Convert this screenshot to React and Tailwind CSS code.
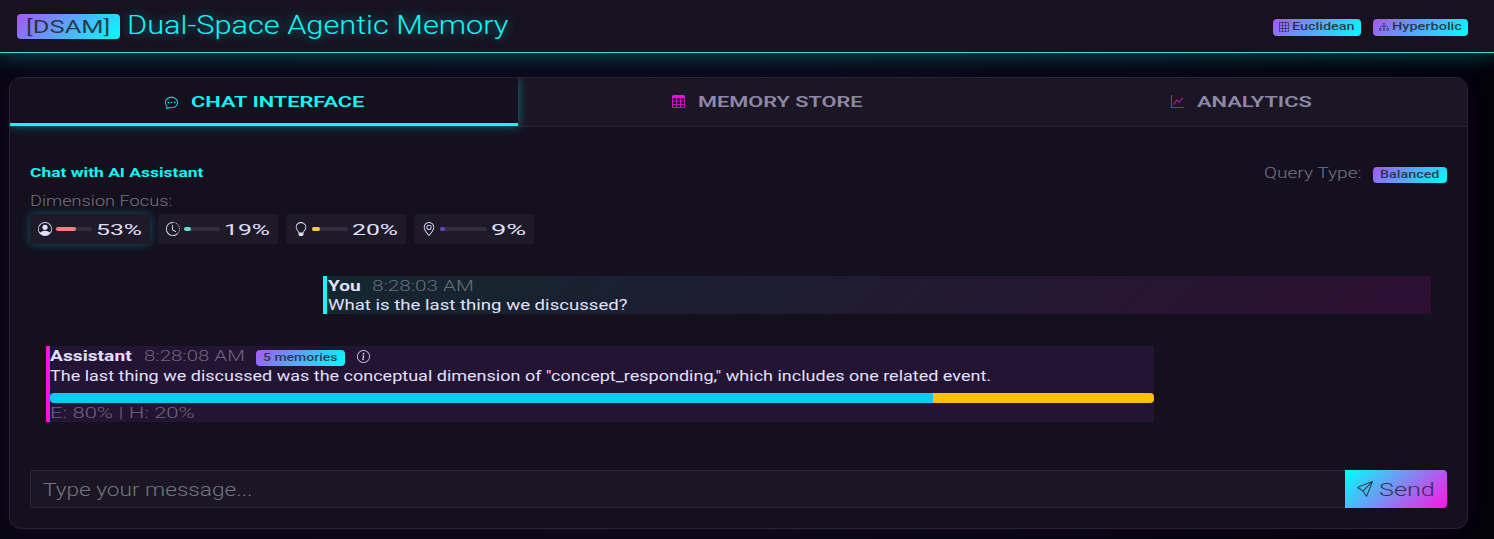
import { useLayoutEffect, useRef } from "react";
import {
  BsChatDots, BsTable, BsGraphUp, BsGrid3X3, BsDiagram3, BsPersonCircle,
  BsClockHistory, BsLightbulb, BsGeoAlt, BsInfoCircle, BsSend,
} from "react-icons/bs";

// Stretches its text horizontally so that it fills the width given in className.
function Wide({ className = "", children }) {
  const outer = useRef(null);
  const inner = useRef(null);
  useLayoutEffect(() => {
    const ratio = outer.current.clientWidth / inner.current.offsetWidth;
    inner.current.style.transform = `scaleX(${ratio})`;
  }, [children]);
  return (
    <span ref={outer} className={`block shrink-0 whitespace-nowrap ${className}`}>
      <span ref={inner} className="inline-block origin-left align-top">{children}</span>
    </span>
  );
}

const badge = "flex items-center rounded bg-linear-135/srgb from-[#a855f7] to-[#00ffff] text-[#212529]/85";

function Tab({ icon: Icon, label, className, active }) {
  return (
    <div
      className={`flex items-center justify-center gap-[13px] text-[15px] leading-6 font-semibold ${className} ${
        active
          ? "relative bg-[#14101e] border-b-3 border-[#14f5f5] pt-[3px] text-[#14f5f5] shadow-[0_0_10px_rgba(0,255,255,0.4)]"
          : "pb-px text-[#8d88a5]"
      }`}
    >
      <Icon className={active ? "size-[13px]" : "size-[13px] text-[#e815d8]"} />
      {label}
    </div>
  );
}

const dims = [
  { Icon: BsPersonCircle, text: "53%", w: "w-[46px]", fill: "w-[55%] bg-[#f47f83]", glow: "shadow-[0_0_10px_rgba(0,255,255,0.3)]" },
  { Icon: BsClockHistory, text: "19%", w: "w-[46px]", fill: "w-[19%] bg-[#66d9d0]", glow: "" },
  { Icon: BsLightbulb, text: "20%", w: "w-[46px]", fill: "w-[21%] bg-[#f9ca4a]", glow: "" },
  { Icon: BsGeoAlt, text: "9%", w: "w-[35px]", fill: "w-[10%] bg-[#7040c8]", glow: "" },
];

export default function App() {
  return (
    <div className="flex h-[539px] flex-col overflow-hidden bg-linear-90/srgb from-[#090613] via-[#0b0817] to-[#030109] font-[Roboto,sans-serif] text-[#e0e0ff]">
      <header className="flex h-[53px] shrink-0 items-center justify-between border-b border-[#2fdde3] bg-[#171220] pr-[26px] pl-[17px] shadow-[0_2px_22px_rgba(0,255,255,0.3)]">
        <div className="flex items-center gap-[7px]">
          <div className={`${badge} h-[25px] px-[9px] text-[18px]`}>
            <Wide className="w-[85px]">[DSAM]</Wide>
          </div>
          <Wide className="w-[381px] text-[25px] leading-8 font-light text-[#14f5f5] [text-shadow:0_0_10px_rgba(0,255,255,0.5)]">Dual-Space Agentic Memory</Wide>
        </div>
        <div className="flex gap-3 pt-[2px]">
          <div className={`${badge} h-[17px] gap-[3px] px-[6px] text-[11px] font-medium`}>
            <BsGrid3X3 className="size-[10px]" />
            <Wide className="w-[63px] pt-px">Euclidean</Wide>
          </div>
          <div className={`${badge} h-[17px] gap-[3px] px-[6px] text-[11px] font-medium`}>
            <BsDiagram3 className="size-[10px]" />
            <Wide className="w-[70px] pt-px">Hyperbolic</Wide>
          </div>
        </div>
      </header>

      <main className="mt-6 mr-[26px] ml-[9px] flex h-[452px] shrink-0 flex-col overflow-hidden rounded-xl border border-[#2a2333] bg-[#14101e] shadow-[0_0_20px_rgba(139,60,246,0.07)]">
        <nav className="flex h-[49px] shrink-0 border-b border-[#2b2534] bg-[#1b1624]">
          <Tab active icon={BsChatDots} className="w-[508px]" label={<Wide className="w-[173px]">CHAT INTERFACE</Wide>} />
          <Tab icon={BsTable} className="w-[498px]" label={<Wide className="w-[165px]">MEMORY STORE</Wide>} />
          <Tab icon={BsGraphUp} className="w-[451px]" label={<Wide className="w-[115px]">ANALYTICS</Wide>} />
        </nav>

        <section className="flex flex-1 flex-col px-5 pt-9">
          <div className="flex h-5 items-start justify-between">
            <Wide className="w-[173px] text-[13px] leading-5 font-bold text-[#14f5f5]">Chat with AI Assistant</Wide>
            <div className="flex gap-[11px]">
              <Wide className="w-[98px] text-[15px] leading-5 font-light text-[#777383]">Query Type:</Wide>
              <div className={`${badge} mt-1 h-4 px-[7px] text-[11px] font-medium`}>
                <Wide className="w-[60px]">Balanced</Wide>
              </div>
            </div>
          </div>
          <Wide className="mt-2 w-[142px] text-[15px] leading-5 font-light text-[#777383]">Dimension Focus:</Wide>
          <div className="mt-[3px] flex gap-2">
            {dims.map(({ Icon, text, w, fill, glow }) => (
              <div key={text} className={`flex h-[30px] w-[120px] items-center gap-1 rounded bg-[#1f1a28] px-2 ${glow}`}>
                <Icon className="size-[14px] shrink-0" />
                <div className="h-1 flex-1 rounded-full bg-[#332e3d]">
                  <div className={`h-1 rounded-full ${fill}`} />
                </div>
                <Wide className={`${w} pt-px text-[14px] leading-5`}>{text}</Wide>
              </div>
            ))}
          </div>

          <div className="mt-8 mr-4 ml-[293px] h-[38px] border-l-4 border-[#14f5f5] bg-linear-135/srgb from-[#13272f] to-[#2e0f33]">
            <div className="flex h-5 gap-[11px] pl-px">
              <Wide className="w-[33px] text-[15px] leading-5 font-bold">You</Wide>
              <Wide className="w-[102px] text-[15px] leading-5 font-light text-[#6a6d7d]">8:28:03 AM</Wide>
            </div>
            <Wide className="ml-px w-[300px] text-[15px] leading-[18px]">What is the last thing we discussed?</Wide>
          </div>

          <div className="mt-8 ml-4 h-[76px] w-[1108px] border-l-4 border-[#ff14e4] bg-[#241433]">
            <div className="flex h-5">
              <Wide className="w-[82px] text-[15px] leading-5 font-bold">Assistant</Wide>
              <Wide className="ml-3 w-[101px] text-[15px] leading-5 font-light text-[#6f657d]">8:28:08 AM</Wide>
              <div className={`${badge} mt-1 ml-[11px] h-4 px-[7px] text-[11px] font-medium`}>
                <Wide className="w-[75px]">5 memories</Wide>
              </div>
              <BsInfoCircle className="mt-1 ml-3 size-[13px]" />
            </div>
            <Wide className="w-[941px] text-[15px] leading-5">The last thing we discussed was the conceptual dimension of "concept_responding," which includes one related event.</Wide>
            <div className="mt-[7px] flex h-[10px] overflow-hidden rounded">
              <div className="w-4/5 bg-[#0dcaf0]" />
              <div className="w-1/5 bg-[#ffc107]" />
            </div>
            <Wide className="w-[145px] pt-px text-[15px] leading-[18px] font-light text-[#6f657d]">E: 80% | H: 20%</Wide>
          </div>

          <div className="mt-12 flex h-[38px]">
            <div className="flex flex-1 items-center rounded-l border border-r-0 border-[#2a2433] bg-[#1b1624] pl-3">
              <Wide className="w-[210px] text-[18px] font-light text-[#777380]">Type your message...</Wide>
            </div>
            <div className="flex w-[102px] items-center gap-[6px] rounded-r bg-linear-135/srgb from-[#00ffff] to-[#ff14e4] pl-3 text-[#212529]/85">
              <BsSend className="size-4" />
              <Wide className="w-[56px] pt-px text-[18px] font-light">Send</Wide>
            </div>
          </div>
        </section>
      </main>
    </div>
  );
}
